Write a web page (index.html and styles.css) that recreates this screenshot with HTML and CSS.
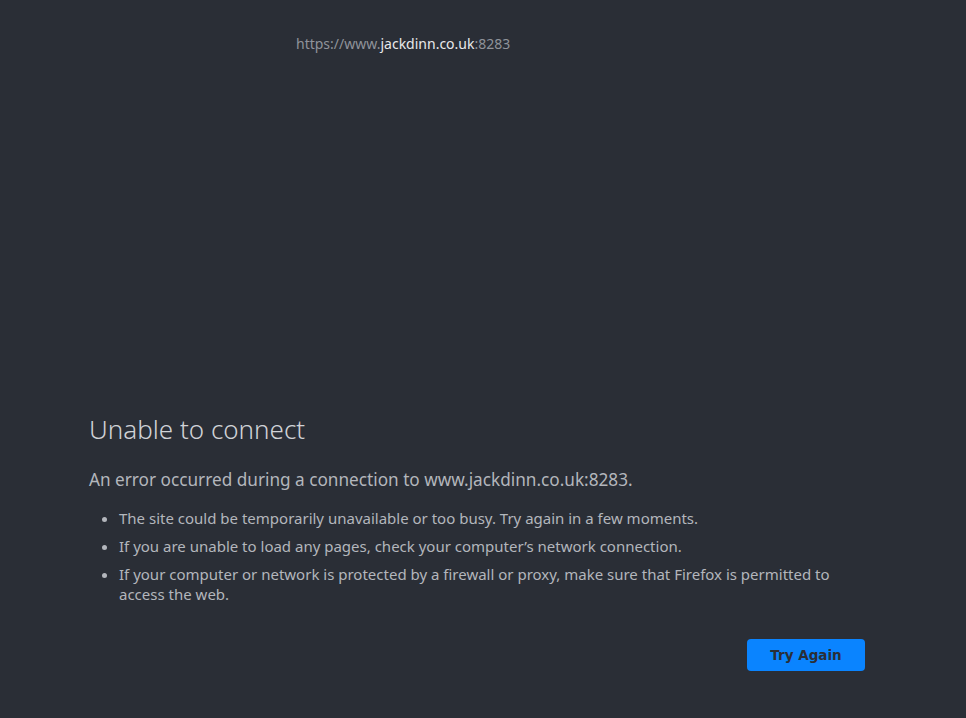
FILE: index.html
```html
<!DOCTYPE html>
<html lang="en">
<head>
    <meta charset="UTF-8">
    <title>Problem loading page</title>
    <link rel="stylesheet" href="styles.css">
</head>
<body>
    <div class="url-bar">
        <span class="url-dim">https://www.</span><span class="url-host">jackdinn.co.uk</span><span class="url-dim">:8283</span>
    </div>

    <div class="container">
        <h1 class="title">Unable to connect</h1>
        <p class="short-desc">An error occurred during a connection to www.jackdinn.co.uk:8283.</p>

        <ul class="long-desc">
            <li>The site could be temporarily unavailable or too busy. Try again in a few moments.</li>
            <li>If you are unable to load any pages, check your computer’s network connection.</li>
            <li>If your computer or network is protected by a firewall or proxy, make sure that Firefox is permitted to access the web.</li>
        </ul>

        <div class="button-container">
            <button class="try-again">Try Again</button>
        </div>
    </div>
</body>
</html>
```

FILE: styles.css
```css
body {
    font-family: "Noto Sans", sans-serif;
    margin: 0;
    padding: 0;
    background-color: #2a2e36;
    color: #b3b6bc;
    height: 718px;
    overflow: hidden;
}

.url-bar {
    padding: 34px 0 0 296px;
    font-size: 14px;
    line-height: 20px;
}

.url-dim {
    color: #8f939a;
}

.url-host {
    color: #e8e9eb;
}

.container {
    margin: 0 101px 0 89px;
    padding-top: 357px;
}

.title {
    font-size: 26px;
    font-weight: 300;
    line-height: 36px;
    color: #d0d2d6;
    margin: 0 0 21px 0;
}

.short-desc {
    font-size: 17.2px;
    line-height: 24px;
    margin: 0 0 16px 0;
}

.long-desc {
    font-size: 15px;
    line-height: 20px;
    margin: 0;
    padding-left: 30px;
}

.long-desc li {
    margin-bottom: 8px;
}

.button-container {
    display: flex;
    justify-content: flex-end;
    margin-top: 35px;
}

.try-again {
    font-family: "DejaVu Sans", sans-serif;
    font-weight: bold;
    font-size: 13.5px;
    width: 118px;
    height: 32px;
    background-color: #0a84ff;
    color: #2a2e36;
    border: none;
    border-radius: 4px;
}
```
